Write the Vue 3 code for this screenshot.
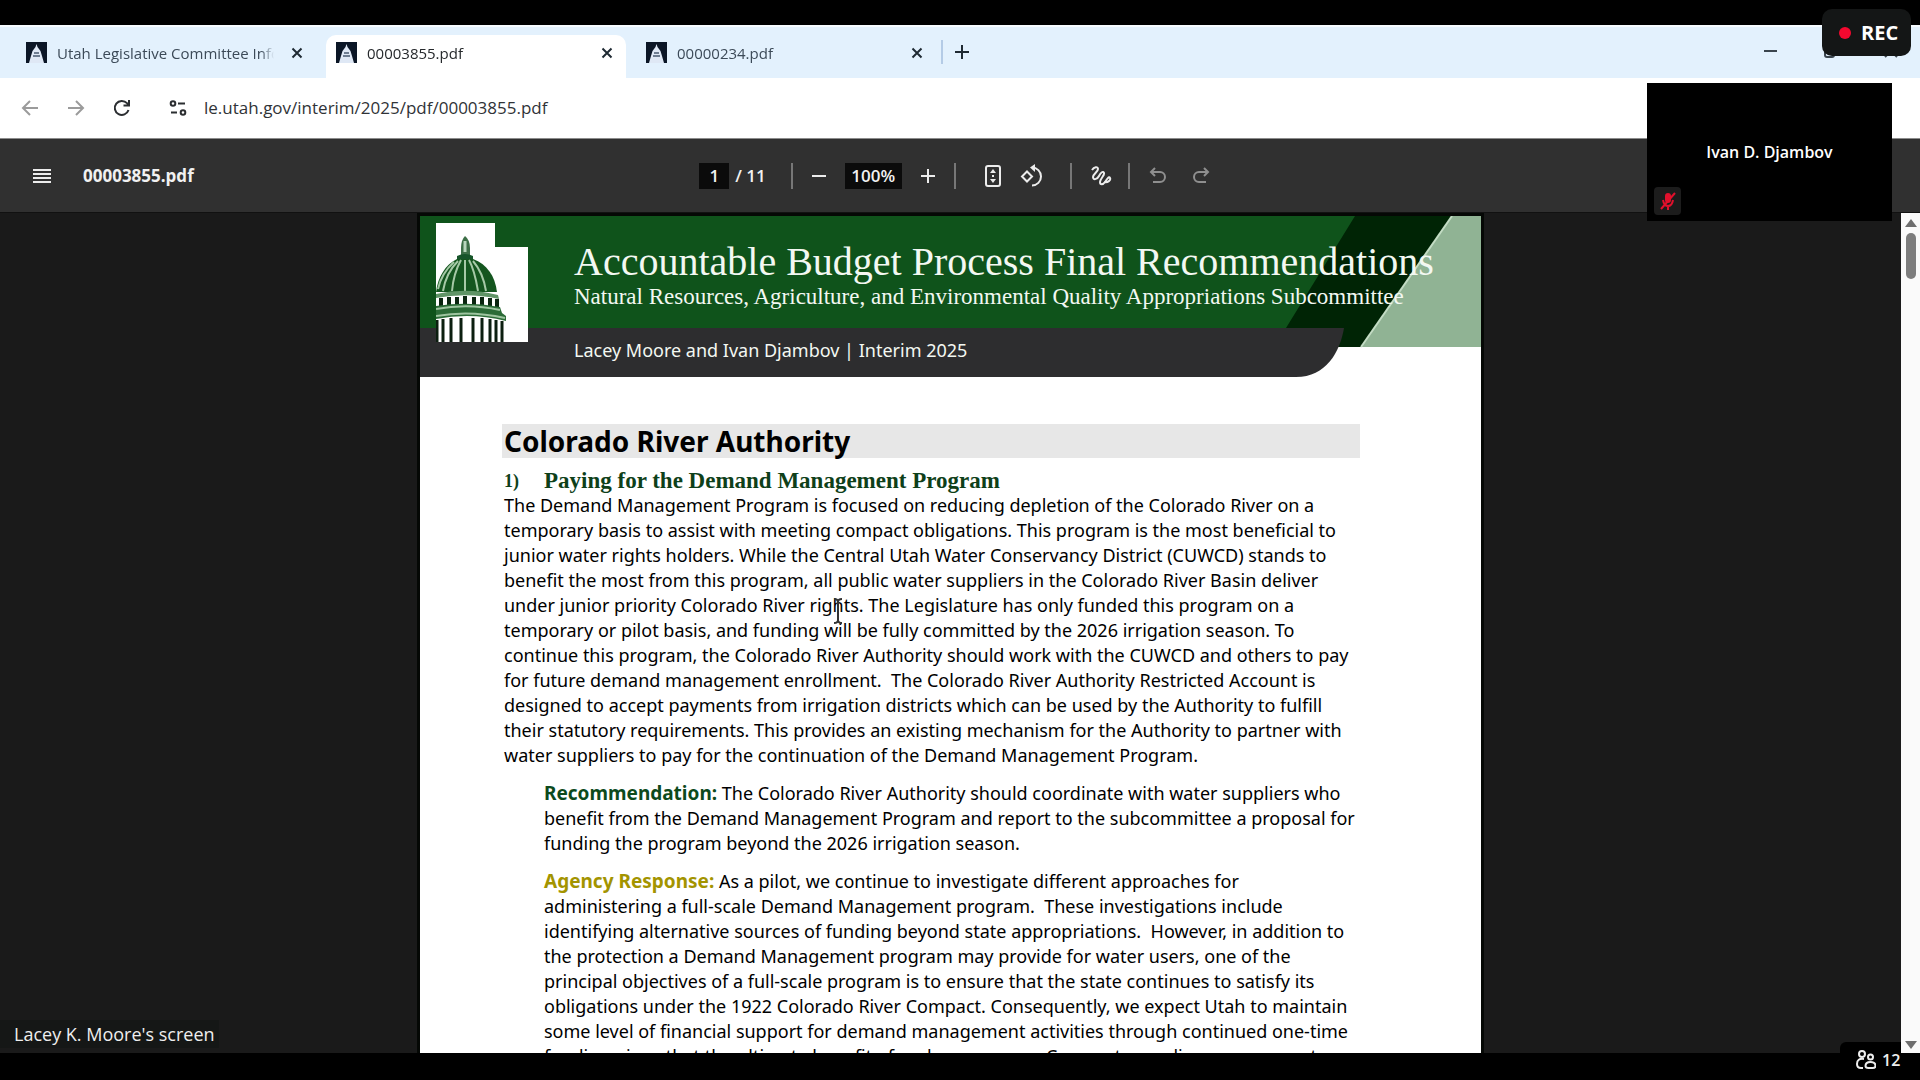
<script setup>
import { ref } from 'vue'

const tabs = ref([
  { title: 'Utah Legislative Committee Information', active: false },
  { title: '00003855.pdf', active: true },
  { title: '00000234.pdf', active: false },
])
const url = ref('le.utah.gov/interim/2025/pdf/00003855.pdf')
const pageNo = ref('1')
const zoom = ref('100%')

// PDF lines keep their own breaks
const intro = [
  'The Demand Management Program is focused on reducing depletion of the Colorado River on a',
  'temporary basis to assist with meeting compact obligations. This program is the most beneficial to',
  'junior water rights holders. While the Central Utah Water Conservancy District (CUWCD) stands to',
  'benefit the most from this program, all public water suppliers in the Colorado River Basin deliver',
  'under junior priority Colorado River rights. The Legislature has only funded this program on a',
  'temporary or pilot basis, and funding will be fully committed by the 2026 irrigation season. To',
  'continue this program, the Colorado River Authority should work with the CUWCD and others to pay',
  'for future demand management enrollment.  The Colorado River Authority Restricted Account is',
  'designed to accept payments from irrigation districts which can be used by the Authority to fulfill',
  'their statutory requirements. This provides an existing mechanism for the Authority to partner with',
  'water suppliers to pay for the continuation of the Demand Management Program.',
].join('\n')

const notes = [
  {
    kind: 'rec',
    label: 'Recommendation:',
    text: [
      ' The Colorado River Authority should coordinate with water suppliers who',
      'benefit from the Demand Management Program and report to the subcommittee a proposal for',
      'funding the program beyond the 2026 irrigation season.',
    ].join('\n'),
  },
  {
    kind: 'agency',
    label: 'Agency Response:',
    text: [
      ' As a pilot, we continue to investigate different approaches for',
      'administering a full-scale Demand Management program.  These investigations include',
      'identifying alternative sources of funding beyond state appropriations.  However, in addition to',
      'the protection a Demand Management program may provide for water users, one of the',
      'principal objectives of a full-scale program is to ensure that the state continues to satisfy its',
      'obligations under the 1922 Colorado River Compact. Consequently, we expect Utah to maintain',
      'some level of financial support for demand management activities through continued one-time',
      'funding given that the ultimate benefit of such a program.  Compact compliance – accrues to',
    ].join('\n'),
  },
]
</script>

<template>
  <div class="meeting">
    <div class="browser">
      <div class="tabstrip">
        <div v-for="t in tabs" :key="t.title" class="tab" :class="{ active: t.active }">
          <svg class="favicon" viewBox="0 0 21 21">
            <rect width="21" height="21" fill="#0b1626" />
            <path d="M10.500 2l1 3 3 4 1.500 5 2 7H3l2-7 1.500-5 3-4z" fill="#dfe8f5" />
            <path d="M8 11h5M7 14h7" stroke="#4a5a70" stroke-width="1.500" />
          </svg>
          <span class="tab-title">{{ t.title }}</span>
          <button class="tab-close" aria-label="Close tab">
            <svg viewBox="0 0 12 12" width="12" height="12"><path d="M1.500 1.500l9 9M10.500 1.500l-9 9" /></svg>
          </button>
        </div>
        <span class="tab-sep"></span>
        <button class="tab-new" aria-label="New tab">
          <svg viewBox="0 0 14 14" width="14" height="14"><path d="M7 0v14M0 7h14" /></svg>
        </button>
        <div class="win-controls">
          <svg viewBox="0 0 14 14" width="14" height="14"><path d="M0 7h13" /></svg>
          <svg viewBox="0 0 14 14" width="14" height="14"><rect x="1" y="4" width="9" height="9" rx="2" /><path d="M4 1h6q3 0 3 3v6" /></svg>
          <svg viewBox="0 0 14 14" width="14" height="14"><path d="M1 1l12 12M13 1L1 13" /></svg>
        </div>
      </div>

      <div class="addressbar">
        <button class="nav dim" aria-label="Back">
          <svg viewBox="0 0 18 18" width="18" height="18"><path d="M17 9H2M9 2L2 9l7 7" /></svg>
        </button>
        <button class="nav dim" aria-label="Forward">
          <svg viewBox="0 0 18 18" width="18" height="18"><path d="M1 9h15M9 2l7 7-7 7" /></svg>
        </button>
        <button class="nav" aria-label="Reload">
          <svg viewBox="0 0 18 18" width="18" height="18"><path d="M15.500 11A7 7 0 1 1 14 4.200L16 6.500M16 1v5.500h-5.500" /></svg>
        </button>
        <button class="nav site" aria-label="Site information">
          <svg viewBox="0 0 18 18" width="18" height="18"><circle cx="4" cy="4.500" r="2.300" /><path d="M9 4.500h7M2 13.500h6" /><circle cx="14" cy="13.500" r="2.300" /></svg>
        </button>
        <input class="url" v-model="url" aria-label="Address">
        <button class="nav kebab" aria-label="Menu">
          <svg viewBox="0 0 6 20" width="6" height="20"><circle cx="3" cy="3" r="2" /><circle cx="3" cy="10" r="2" /><circle cx="3" cy="17" r="2" /></svg>
        </button>
      </div>

      <div class="pdfbar">
        <div class="pdf-left">
          <button class="tool" aria-label="Menu">
            <svg viewBox="0 0 18 14" width="18" height="14"><path d="M0 1h18M0 5h18M0 9h18M0 13h18" /></svg>
          </button>
          <span class="pdf-name">00003855.pdf</span>
        </div>
        <div class="pdf-center">
          <input class="field page-no" v-model="pageNo" aria-label="Page number">
          <span class="total">/ 11</span>
          <i class="bar"></i>
          <button class="tool" aria-label="Zoom out">
            <svg viewBox="0 0 24 24" width="24" height="24"><path d="M5 12h14" stroke-width="3" /></svg>
          </button>
          <input class="field zoom" v-model="zoom" aria-label="Zoom level">
          <button class="tool" aria-label="Zoom in">
            <svg viewBox="0 0 24 24" width="24" height="24"><path d="M5 12h14M12 5v14" /></svg>
          </button>
          <i class="bar"></i>
          <button class="tool fit" aria-label="Fit to page">
            <svg viewBox="0 0 24 24" width="24" height="24"><rect x="5" y="2" width="14" height="20" rx="2" /><path d="M12 5l3 4H9zM12 19l3-4H9zM11 11h2v2h-2z" class="solid" /></svg>
          </button>
          <button class="tool" aria-label="Rotate">
            <svg viewBox="0 0 24 24" width="24" height="24"><path d="M7 7.500l5 5-5 5-5-5zM12 3.500a9 9 0 1 1 0 18" /><path d="M15 0l-5 3.500L15 8z" class="solid" /></svg>
          </button>
          <i class="bar after-view"></i>
          <button class="tool wide" aria-label="Draw">
            <svg viewBox="0 0 24 24" width="24" height="24"><path d="M4 6c2-3 6-4 6-1s-5 5-5 8 4 3 6-1 4-5 5-3-4 6-4 9 3 3 5 0 4-6 5-4-2 5-6 4" /></svg>
          </button>
          <i class="bar"></i>
          <button class="tool wide dim" aria-label="Undo">
            <svg viewBox="0 0 24 24" width="24" height="24"><path d="M9 4L5 8l4 4M5 8h9a5 5 0 0 1 0 10H7" /></svg>
          </button>
          <button class="tool wide dim" aria-label="Redo">
            <svg viewBox="0 0 24 24" width="24" height="24"><path d="M15 4l4 4-4 4M19 8h-9a5 5 0 0 0 0 10h7" /></svg>
          </button>
        </div>
      </div>

      <div class="viewer">
        <div class="canvas">
          <article class="sheet">
            <header class="banner">
              <svg class="banner-bg" viewBox="0 0 1061 161" preserveAspectRatio="none">
                <rect width="1061" height="112" fill="#0f531b" />
                <path d="M935 0h97L941 131H860V112h6z" fill="#002405" />
                <path d="M1032 0h29v131H941z" fill="#90b394" />
                <path d="M1032 0L941 131" stroke="#c3dcc4" stroke-width="2" />
                <path d="M0 112h924c-4 24-18 49-48 49H0z" fill="#2d2d2f" />
              </svg>
              <!-- Utah outline with the capitol dome -->
              <svg class="seal" viewBox="0 0 92 119" width="92" height="119">
                <path d="M0 0h59v24h33v95H0z" fill="#fff" />
                <path d="M29 13q5 4 5 12v7h-9v-7q0-8 4-12z" fill="#3d6f47" />
                <path d="M29 18v11" stroke="#b9d6bd" stroke-width="3" />
                <path d="M21 33q8-4 16 0v3H21z" fill="#17552a" />
                <path d="M21 36C9 42 2 54 0 69h61C59 53 51 41 37 36z" fill="#14561f" />
                <path d="M22 38C14 46 9 56 7 68M25 37C20 46 17 56 16 68M29 37v31M33 37c5 9 7 19 9 31M37 38c7 8 11 18 13 30M18 39C8 48 4 57 2 66" fill="none" stroke="#a5c9a6" stroke-width="2" />
                <path d="M0 71q31-7 62 1l1 4q-32-7-63-1z" fill="#5f9466" />
                <path d="M5 75v10M13 74v10M21 74v10M29 73v10M38 74v10M46 74v10M54 75v10M61 76v9" stroke="#0a2510" stroke-width="4" />
                <path d="M0 83q32-5 64 1l2 6 4 3v5q-35-9-70-2z" fill="#2b6b37" />
                <path d="M0 86q32-6 64 1M0 93q34-6 69 2" fill="none" stroke="#9dc49f" stroke-width="2" />
                <path d="M1 97v22M7 96v23M15 95v24M25 95v24M37 95v24M46 95v24M54 96v23M60 97v22M66 98v21" stroke="#0c1f10" stroke-width="3" />
              </svg>
              <div class="banner-text">
                <h1>Accountable Budget Process Final Recommendations</h1>
                <p class="committee">Natural Resources, Agriculture, and Environmental Quality Appropriations Subcommittee</p>
                <p class="authors">Lacey Moore and Ivan Djambov | Interim 2025</p>
              </div>
            </header>

            <section class="content">
              <h2>Colorado River Authority</h2>
              <h3><span class="num">1)</span>Paying for the Demand Management Program</h3>
              <p class="para">{{ intro }}</p>
              <p v-for="n in notes" :key="n.kind" class="para note"><b :class="n.kind">{{ n.label }}</b>{{ n.text }}</p>
            </section>
          </article>
        </div>
        <div class="scrollbar">
          <span class="up"></span>
          <span class="thumb"></span>
          <span class="down"></span>
        </div>
      </div>
    </div>

    <svg class="ibeam" viewBox="0 0 12 26" width="12" height="26"><path d="M2 1q4 0 4 3v18q0 3-4 3M10 1q-4 0-4 3M6 22q0 3 4 3" /></svg>

    <div class="rec-badge"><i></i>REC</div>

    <div class="tile">
      <span class="tile-name">Ivan D. Djambov</span>
      <span class="muted">
        <svg viewBox="0 0 20 20" width="20" height="20"><rect x="7" y="2" width="6" height="10" rx="3" fill="#e0102c" /><path d="M5 9q1 6 5 6t5-6M10 15v4M17 2L3 18" fill="none" stroke="#e0102c" stroke-width="2" /></svg>
      </span>
    </div>

    <div class="sharer">Lacey K. Moore's screen</div>

    <div class="people">
      <svg viewBox="0 0 20 20" width="20" height="20"><circle cx="6" cy="4" r="3" /><circle cx="14.500" cy="7" r="2.500" /><path d="M8 9Q1 8 1 14q0 4 4 4h2M14.500 12q-5 0-5 4 0 2 3 2h4q3 0 3-2 0-4-5-4z" /></svg>
      <span>12</span>
    </div>
  </div>
</template>

<style>
body { background: #000; }
</style>

<style scoped>
.meeting {
  position: relative; box-sizing: border-box; height: 100vh; padding: 25px 0 27px;
  background: #000; overflow: hidden; font-family: 'Open Sans', 'Noto Sans', sans-serif;
}
.browser { display: flex; flex-direction: column; height: 100%; overflow: hidden; }
button { border: none; background: none; padding: 0; display: flex; align-items: center; justify-content: center; cursor: pointer; }
svg { display: block; flex-shrink: 0; }
h1, h2, h3, p { margin: 0; font-weight: 400; }
input { border: none; outline: none; padding: 0; font-family: inherit; }

/* ---- tabs ---- */
.tabstrip {
  display: flex; align-items: stretch; height: 53px; flex-shrink: 0; box-sizing: border-box;
  padding: 8px 0 0 16px; background: #e3f1fd; border-top: 2px solid #f7fbff;
}
.tab { display: flex; align-items: center; width: 310px; box-sizing: border-box; padding: 0 12px 8px 10px; color: #3c4a58; }
.tab.active { background: #fff; border-radius: 10px 10px 0 0; width: 300px; margin-right: 10px; color: #26292c; }
.favicon { width: 21px; height: 21px; }
.tab-title {
  flex: 1; margin-left: 10px; font-size: 15px; line-height: 20px; white-space: nowrap; overflow: hidden;
  mask-image: linear-gradient(90deg, #000 94%, transparent);
}
.tab-close { width: 14px; height: 20px; margin: 0 0 0 16px; }
.tab:first-child .tab-close { margin-right: 10px; }
.tab:nth-child(3) { width: 300px; }
.tab-close path, .tab-new path { fill: none; stroke: #1f2a33; stroke-width: 2; }
.tab-sep { width: 2px; height: 24px; margin: 5px 0 0 5px; background: #b4cbe6; }
.tab-new { width: 38px; height: 34px; }
.win-controls { display: flex; gap: 46px; margin-left: auto; padding: 9px 22px 0 0; }
.win-controls path, .win-controls rect { fill: none; stroke: #3a444d; stroke-width: 2; }

/* ---- address bar ---- */
.addressbar { display: flex; align-items: center; height: 60px; flex-shrink: 0; background: #fff; padding: 0 24px 0 21px; }
.nav { width: 18px; height: 24px; margin-right: 28px; }
.nav path, .nav circle { fill: none; stroke: #2b2e31; stroke-width: 2; }
.nav.dim path { stroke: #9b9b9b; }
.nav.site { margin: 0 17px 0 10px; }
.url { flex: 1; font-size: 17px; line-height: 24px; color: #303337; background: transparent; font-weight: 500; }
.nav.kebab { width: 12px; margin: 0; }
.nav.kebab circle { fill: #2b2e31; stroke: none; }

/* ---- pdf toolbar ---- */
.pdfbar {
  display: grid; grid-template-columns: 1fr auto 1fr; align-items: center; height: 74px; flex-shrink: 0;
  padding-right: 5px; background: #303030; color: #f1f1f1; border-top: 1px solid #8c8c8c; box-sizing: border-box;
}
.pdf-left { display: flex; align-items: center; padding-left: 33px; gap: 32px; }
.pdf-name { font-size: 17px; font-weight: 700; }
.pdf-center { display: flex; align-items: center; gap: 13px; font-size: 17px; font-weight: 600; }
.tool { width: 26px; height: 26px; }
.tool.wide { width: 30px; }
.pdf-left .tool { width: 18px; }
.tool path, .tool rect { fill: none; stroke: #ececec; stroke-width: 2; }
.tool .solid { fill: #ececec; stroke: none; }
.tool.dim path { stroke: #8f8f8f; }
.field { height: 26px; background: #0b0b0b; color: #f1f1f1; text-align: center; font-size: 17px; font-weight: 600; }
.page-no { width: 30px; }
.zoom { width: 57px; }
.total { margin: 0 12px 0 -7px; }
.bar { width: 2px; height: 26px; background: #777; }
.fit { margin-left: 11px; }
.after-view { margin-left: 12px; }

/* ---- viewer ---- */
.viewer { flex: 1; display: flex; min-height: 0; background: #1a1a1a; border-top: 1px solid #111; }
.canvas { flex: 1; display: flex; justify-content: center; align-items: flex-start; overflow: hidden; padding-top: 3px; }
.sheet { width: 100%; max-width: 1061px; min-height: 1370px; background: #fff; box-shadow: 0 0 0 3px #050805; }
.banner { position: relative; height: 161px; display: flex; padding: 7px 0 0 16px; box-sizing: border-box; }
.banner-bg { position: absolute; inset: 0; width: 100%; height: 100%; }
.seal { position: relative; }
.banner-text { position: relative; padding-left: 46px; color: #f3f8f2; white-space: nowrap; font-family: Georgia, 'Liberation Serif', serif; }
h1 { font-size: 40px; line-height: 44px; padding-top: 17px; }
.committee { font-size: 23px; line-height: 26px; }
.authors { margin-top: 26px; font-size: 18px; line-height: 28px; font-family: Tahoma, 'Noto Sans', sans-serif; }
.content { padding: 47px 82px 0; color: #000; font-family: Tahoma, 'Noto Sans', sans-serif; }
h2 {
  margin-right: 39px; padding-left: 2px; background: #e7e7e7; color: #000; font-weight: 700;
  font-size: 28px; line-height: 34px;
}
h3 {
  margin-top: 11px; padding-left: 2px; color: #0e4019; font-weight: 700; font-size: 23px; line-height: 24px;
  font-family: Georgia, 'Liberation Serif', serif; display: flex;
}
.num { width: 40px; font-size: 18px; }
.para { padding-left: 2px; font-size: 18px; line-height: 25px; white-space: pre; }
.note { padding-left: 42px; margin-top: 13px; }
.note b { font-size: 19px; line-height: 24px; }
.rec { color: #0d4a1c; }
.agency { color: #a39400; }

/* ---- scrollbar ---- */
.scrollbar { width: 19px; background: #fafafa; display: flex; flex-direction: column; align-items: center; }
.up, .down { border: 6px solid transparent; border-top: none; border-bottom: 8px solid #6e6e6e; margin: 6px 0; }
.thumb { width: 10px; height: 46px; border-radius: 5px; background: #7d7d7d; }
.down { margin-top: auto; margin-bottom: 4px; border-bottom: none; border-top: 8px solid #6e6e6e; }

/* ---- overlays ---- */
.ibeam { position: absolute; left: 832px; top: 598px; }
.ibeam path { fill: none; stroke: #333; stroke-width: 2; }
.rec-badge {
  position: absolute; top: 9px; right: 9px; width: 89px; height: 47px; box-sizing: border-box; padding-left: 17px;
  display: flex; align-items: center; gap: 10px; border-radius: 10px;
  background: #141616; color: #fff; font-size: 20px; font-weight: 700;
}
.rec-badge i { width: 12px; height: 12px; border-radius: 50%; background: #f5082f; }
.tile {
  position: absolute; top: 83px; right: 28px; width: 245px; height: 138px; background: #000;
  display: flex; align-items: center; justify-content: center; color: #fff; font-size: 16px; font-weight: 600;
}
.muted { position: absolute; left: 7px; bottom: 6px; width: 27px; height: 28px; background: #1c1c1c; border-radius: 4px; display: flex; align-items: center; justify-content: center; }
.sharer {
  position: absolute; left: 0; bottom: 32px; padding: 2px 4px 2px 14px; background: #151716; color: #eee;
  font-size: 18px; line-height: 24px; font-weight: 500;
}
.people {
  position: absolute; right: 19px; bottom: 0; height: 38px; width: 61px; box-sizing: border-box; padding: 0 0 3px 16px;
  display: flex; align-items: center; gap: 6px; background: #000; color: #eee; font-size: 16px; font-weight: 600;
  border-radius: 6px 0 0 0;
}
.people svg { fill: none; stroke: #eee; stroke-width: 2; }
</style>
